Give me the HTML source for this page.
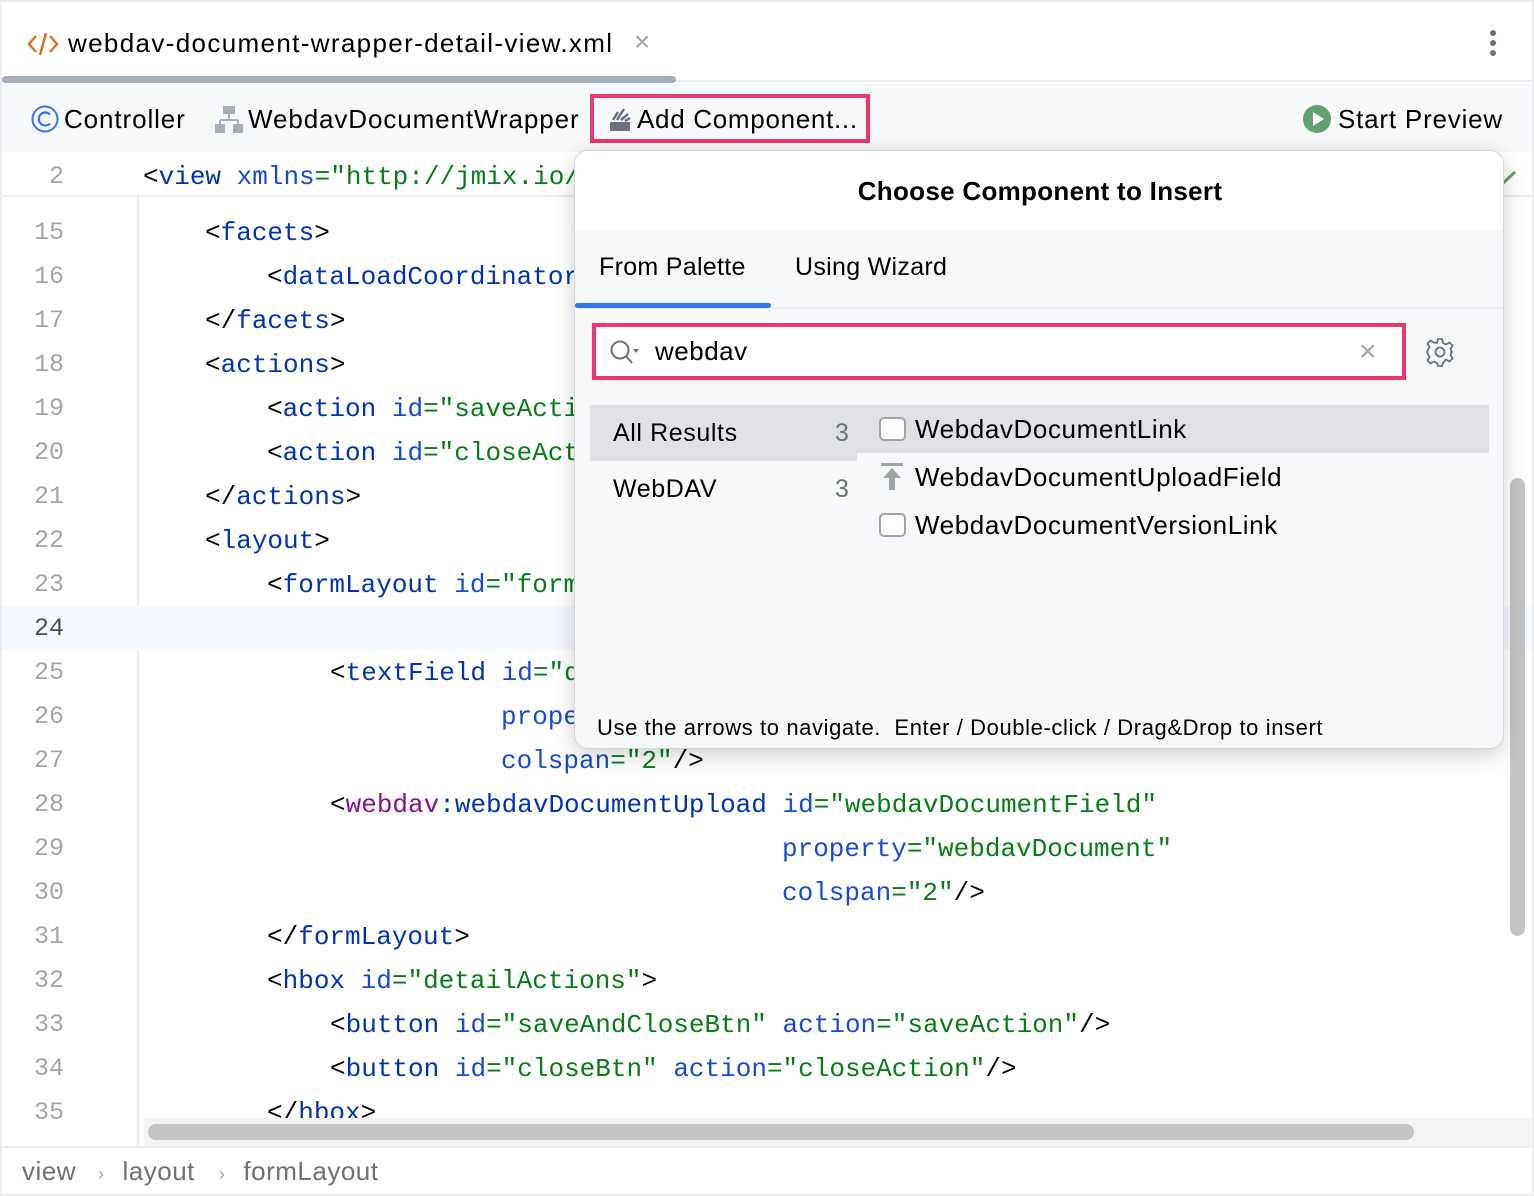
<!DOCTYPE html>
<html><head><meta charset="utf-8"><style>
*{margin:0;padding:0;box-sizing:border-box}
body{width:1534px;height:1196px;overflow:hidden;background:#ebecf0;font-family:"Liberation Sans",sans-serif;position:relative}
.abs{position:absolute}
#frame{left:2px;top:2px;width:1530px;height:1192px;background:#fff;overflow:hidden}
.ui{font-size:26px;color:#000;white-space:nowrap}
.code{font-family:"Liberation Mono",monospace;font-size:26px;white-space:pre;line-height:44px;height:44px}
.ln{font-family:"Liberation Mono",monospace;font-size:25px;color:#a2a5ad;width:62px;text-align:right;line-height:44px;height:44px}
.t{color:#0033b3}.a{color:#174ad4}.v{color:#067d17}.p{color:#871094}.k{color:#000}
.ed{position:absolute;left:0;top:2px;width:1530px;height:1200px}
</style></head><body>
<div id="frame" class="abs">
 <div class="abs" style="left:0;top:0;width:1530px;height:80px;background:#fff;border-bottom:2px solid #ebecf0"></div>
 <svg class="abs" style="left:24px;top:28px" width="34" height="28" viewBox="0 0 34 28"><path d="M10 6 L3 14 L10 22" fill="none" stroke="#e06c1f" stroke-width="2.4"/><path d="M20 3 L14 25" stroke="#e06c1f" stroke-width="2.4"/><path d="M24 6 L31 14 L24 22" fill="none" stroke="#e06c1f" stroke-width="2.4"/></svg>
 <div class="abs ui" style="left:66px;top:25px;line-height:32px;letter-spacing:1.35px">webdav-document-wrapper-detail-view.xml</div>
 <div class="abs" style="left:632px;top:24px;font-size:28px;color:#a0a3ad">×</div>
 <div class="abs" style="left:0;top:74px;width:674px;height:7px;background:#a8adbd;border-radius:4px"></div>
 <div class="abs" style="left:1488px;top:28px;width:6px;height:6px;border-radius:3px;background:#6c707e;box-shadow:0 10px 0 #6c707e,0 20px 0 #6c707e"></div>
 <div class="abs" style="left:0;top:82px;width:1530px;height:68px;background:#f7f8fa"></div>
 <svg class="abs" style="left:28px;top:102px" width="30" height="30"><circle cx="15" cy="15" r="12.5" fill="none" stroke="#3574f0" stroke-width="2"/><path d="M20 10.5 A6.5 6.5 0 1 0 20 19.5" fill="none" stroke="#3574f0" stroke-width="2.2"/></svg>
 <div class="abs ui" style="left:62px;top:100px;line-height:34px;letter-spacing:0.9px">Controller</div>
 <svg class="abs" style="left:212px;top:102px" width="30" height="30"><rect x="9" y="2" width="12" height="8" fill="#a8adbd"/><path d="M15 10 L15 16 M6 16 L24 16 M6 16 L6 20 M24 16 L24 20" stroke="#a8adbd" stroke-width="2"/><rect x="1" y="20" width="10" height="9" fill="#a8adbd"/><rect x="19" y="20" width="10" height="9" fill="#a8adbd"/></svg>
 <div class="abs ui" style="left:246px;top:100px;line-height:34px;letter-spacing:0.9px">WebdavDocumentWrapper</div>
 <div class="abs" style="left:588px;top:92px;width:280px;height:49px;border:4px solid #e8396a"></div>
 <svg class="abs" style="left:606px;top:104px" width="26" height="26"><rect x="2" y="16" width="20" height="9" rx="1" fill="#6c707e"/><path d="M5 14 L10 6 M9 14 L16 3 M13 14 L20 8 M17 15 L22 12" stroke="#6c707e" stroke-width="2.5"/></svg>
 <div class="abs ui" style="left:635px;top:100px;line-height:34px;letter-spacing:0.7px">Add Component...</div>
 <svg class="abs" style="left:1300px;top:102px" width="30" height="30"><circle cx="15" cy="15" r="14" fill="#5fa36a"/><path d="M11 8 L22 15 L11 22Z" fill="#fff"/></svg>
 <div class="abs ui" style="left:1336px;top:100px;line-height:34px;letter-spacing:0.8px">Start Preview</div>

 <div class="abs" style="left:0;top:150px;width:1530px;height:45px;border-bottom:2px solid #ebecf0;background:#fff"></div>
 <div class="abs" style="left:135px;top:195px;width:2px;height:950px;background:#ebecf0"></div>
 <div class="abs" style="left:0;top:604px;width:1530px;height:44px;background:#f5f8fe"></div>
 <svg class="abs" style="left:1496px;top:166px" width="20" height="20"><path d="M4 16 L17 4" stroke="#5fa36a" stroke-width="3"/></svg>
 <div class="ed">
 <div class="abs ln" style="left:0;top:151px">2</div><div class="abs code" style="left:141px;top:151px"><span class="k">&lt;</span><span class="t">view</span> <span class="a">xmlns</span><span class="v">="http://jmix.io/schema/flowui/view"</span></div>
 <div class="abs ln" style="left:0;top:207px">15</div><div class="abs code" style="left:203px;top:207px"><span class="k">&lt;</span><span class="t">facets</span><span class="k">&gt;</span></div>
 <div class="abs ln" style="left:0;top:251px">16</div><div class="abs code" style="left:265px;top:251px"><span class="k">&lt;</span><span class="t">dataLoadCoordinator</span> <span class="a">auto</span><span class="v">="true"</span></div>
 <div class="abs ln" style="left:0;top:295px">17</div><div class="abs code" style="left:203px;top:295px"><span class="k">&lt;/</span><span class="t">facets</span><span class="k">&gt;</span></div>
 <div class="abs ln" style="left:0;top:339px">18</div><div class="abs code" style="left:203px;top:339px"><span class="k">&lt;</span><span class="t">actions</span><span class="k">&gt;</span></div>
 <div class="abs ln" style="left:0;top:383px">19</div><div class="abs code" style="left:265px;top:383px"><span class="k">&lt;</span><span class="t">action</span> <span class="a">id</span><span class="v">="saveAction"</span></div>
 <div class="abs ln" style="left:0;top:427px">20</div><div class="abs code" style="left:265px;top:427px"><span class="k">&lt;</span><span class="t">action</span> <span class="a">id</span><span class="v">="closeAction"</span></div>
 <div class="abs ln" style="left:0;top:471px">21</div><div class="abs code" style="left:203px;top:471px"><span class="k">&lt;/</span><span class="t">actions</span><span class="k">&gt;</span></div>
 <div class="abs ln" style="left:0;top:515px">22</div><div class="abs code" style="left:203px;top:515px"><span class="k">&lt;</span><span class="t">layout</span><span class="k">&gt;</span></div>
 <div class="abs ln" style="left:0;top:559px">23</div><div class="abs code" style="left:265px;top:559px"><span class="k">&lt;</span><span class="t">formLayout</span> <span class="a">id</span><span class="v">="form"</span></div>
 <div class="abs ln" style="left:0;top:603px;color:#4a4d55">24</div>
 <div class="abs ln" style="left:0;top:647px">25</div><div class="abs code" style="left:328px;top:647px"><span class="k">&lt;</span><span class="t">textField</span> <span class="a">id</span><span class="v">="descField"</span></div>
 <div class="abs ln" style="left:0;top:691px">26</div><div class="abs code" style="left:499px;top:691px"><span class="a">property</span><span class="v">="desc"</span></div>
 <div class="abs ln" style="left:0;top:735px">27</div><div class="abs code" style="left:499px;top:735px"><span class="a">colspan</span><span class="v">="2"</span><span class="k">/&gt;</span></div>
 <div class="abs ln" style="left:0;top:779px">28</div><div class="abs code" style="left:328px;top:779px"><span class="k">&lt;</span><span class="p">webdav</span><span class="t">:webdavDocumentUpload</span> <span class="a">id</span><span class="v">="webdavDocumentField"</span></div>
 <div class="abs ln" style="left:0;top:823px">29</div><div class="abs code" style="left:780px;top:823px"><span class="a">property</span><span class="v">="webdavDocument"</span></div>
 <div class="abs ln" style="left:0;top:867px">30</div><div class="abs code" style="left:780px;top:867px"><span class="a">colspan</span><span class="v">="2"</span><span class="k">/&gt;</span></div>
 <div class="abs ln" style="left:0;top:911px">31</div><div class="abs code" style="left:265px;top:911px"><span class="k">&lt;/</span><span class="t">formLayout</span><span class="k">&gt;</span></div>
 <div class="abs ln" style="left:0;top:955px">32</div><div class="abs code" style="left:265px;top:955px"><span class="k">&lt;</span><span class="t">hbox</span> <span class="a">id</span><span class="v">="detailActions"</span><span class="k">&gt;</span></div>
 <div class="abs ln" style="left:0;top:999px">33</div><div class="abs code" style="left:328px;top:999px"><span class="k">&lt;</span><span class="t">button</span> <span class="a">id</span><span class="v">="saveAndCloseBtn"</span> <span class="a">action</span><span class="v">="saveAction"</span><span class="k">/&gt;</span></div>
 <div class="abs ln" style="left:0;top:1043px">34</div><div class="abs code" style="left:328px;top:1043px"><span class="k">&lt;</span><span class="t">button</span> <span class="a">id</span><span class="v">="closeBtn"</span> <span class="a">action</span><span class="v">="closeAction"</span><span class="k">/&gt;</span></div>
 <div class="abs ln" style="left:0;top:1087px">35</div><div class="abs code" style="left:265px;top:1087px"><span class="k">&lt;/</span><span class="t">hbox</span><span class="k">&gt;</span></div>
 </div>
 <div class="abs" style="left:142px;top:1116px;width:1388px;height:28px;background:#f4f4f4"></div>
 <div class="abs" style="left:146px;top:1122px;width:1266px;height:16px;background:#c4c4c4;border-radius:8px"></div>
 <div class="abs" style="left:1508px;top:476px;width:15px;height:458px;background:#c4c4c4;border-radius:8px"></div>
 <div class="abs" style="left:0;top:1144px;width:1530px;height:2px;background:#ebecf0"></div>
 <div class="abs ui" style="left:20px;top:1152px;line-height:34px;color:#6c707e;letter-spacing:0.5px">view<span style="font-size:18px;color:#a0a3ad;padding:0 18px 0 22px">›</span>layout<span style="font-size:18px;color:#a0a3ad;padding:0 18px 0 24px">›</span>formLayout</div>

 <div class="abs" style="left:572px;top:148px;width:930px;height:599px;background:#f7f8fa;border:1px solid #d3d5db;border-radius:14px;box-shadow:0 6px 24px rgba(0,0,0,.18);overflow:hidden">
  <div class="abs" style="left:0;top:0;width:930px;height:78px;background:#fff"></div>
  <div class="abs ui" style="left:0;top:23px;width:930px;text-align:center;font-weight:bold;line-height:34px;letter-spacing:0.3px">Choose Component to Insert</div>
  <div class="abs ui" style="left:24px;top:99px;line-height:34px;font-size:25px;letter-spacing:0.3px">From Palette</div>
  <div class="abs ui" style="left:220px;top:99px;line-height:34px;font-size:25px;letter-spacing:0.3px">Using Wizard</div>
  <div class="abs" style="left:0;top:156px;width:930px;height:2px;background:#ebecf0"></div>
  <div class="abs" style="left:0;top:152px;width:196px;height:5px;background:#3574f0;border-radius:3px"></div>
  <div class="abs" style="left:17px;top:172px;width:814px;height:57px;border:4px solid #e8396a;background:#fff"></div>
  <svg class="abs" style="left:34px;top:188px" width="34" height="28"><circle cx="11" cy="11" r="8.5" fill="none" stroke="#6c707e" stroke-width="2"/><path d="M17 17 L23 24" stroke="#6c707e" stroke-width="2"/><path d="M24 10 L30 10 L27 14Z" fill="#6c707e"/></svg>
  <div class="abs ui" style="left:80px;top:183px;line-height:34px;letter-spacing:0.5px">webdav</div>
  <div class="abs" style="left:784px;top:184px;font-size:30px;color:#a0a3ad;line-height:34px">×</div>
  <svg class="abs" style="left:850px;top:186px" width="30" height="30" viewBox="0 0 30 30"><path d="M13 2h4l1 4 3 1.5 3.5-2 3 3-2 3.5L27 15l-1 0 1 0 -1.5 3 2 3.5-3 3-3.5-2L18 26l-1 3h-4l-1-3-3-1.5-3.5 2-3-3 2-3.5L3 17l-1-2 1-2 1.5-3-2-3.5 3-3 3.5 2L12 6z" fill="none" stroke="#6c707e" stroke-width="1.8" stroke-linejoin="round"/><circle cx="15" cy="15" r="4.5" fill="none" stroke="#6c707e" stroke-width="1.8"/></svg>
  <div class="abs" style="left:15px;top:254px;width:267px;height:56px;background:#dfe1e5"></div>
  <div class="abs" style="left:282px;top:254px;width:632px;height:48px;background:#dfe1e5"></div>
  <div class="abs ui" style="left:38px;top:265px;line-height:34px;font-size:25px;letter-spacing:0.6px">All Results</div>
  <div class="abs ui" style="left:260px;top:265px;line-height:34px;font-size:25px;color:#6c707e">3</div>
  <div class="abs ui" style="left:38px;top:321px;line-height:34px;font-size:25px;letter-spacing:0.6px">WebDAV</div>
  <div class="abs ui" style="left:260px;top:321px;line-height:34px;font-size:25px;color:#6c707e">3</div>
  <div class="abs" style="left:304px;top:266px;width:27px;height:24px;border:2px solid #a0a3ad;border-radius:5px;background:#fff"></div>
  <div class="abs ui" style="left:340px;top:261px;line-height:34px;letter-spacing:0.6px">WebdavDocumentLink</div>
  <svg class="abs" style="left:304px;top:311px" width="28" height="30"><rect x="2" y="1" width="22" height="3" fill="#a0a3ad"/><path d="M13 6 L22 16 L16 16 L16 28 L10 28 L10 16 L4 16Z" fill="#a0a3ad"/></svg>
  <div class="abs ui" style="left:340px;top:309px;line-height:34px;letter-spacing:0.6px">WebdavDocumentUploadField</div>
  <div class="abs" style="left:304px;top:362px;width:27px;height:24px;border:2px solid #a0a3ad;border-radius:5px;background:#fff"></div>
  <div class="abs ui" style="left:340px;top:357px;line-height:34px;letter-spacing:0.6px">WebdavDocumentVersionLink</div>
  <div class="abs ui" style="left:22px;top:560px;line-height:34px;font-size:22px;letter-spacing:0.6px">Use the arrows to navigate.&nbsp; Enter / Double-click / Drag&amp;Drop to insert</div>
 </div>
</div>
</body></html>
